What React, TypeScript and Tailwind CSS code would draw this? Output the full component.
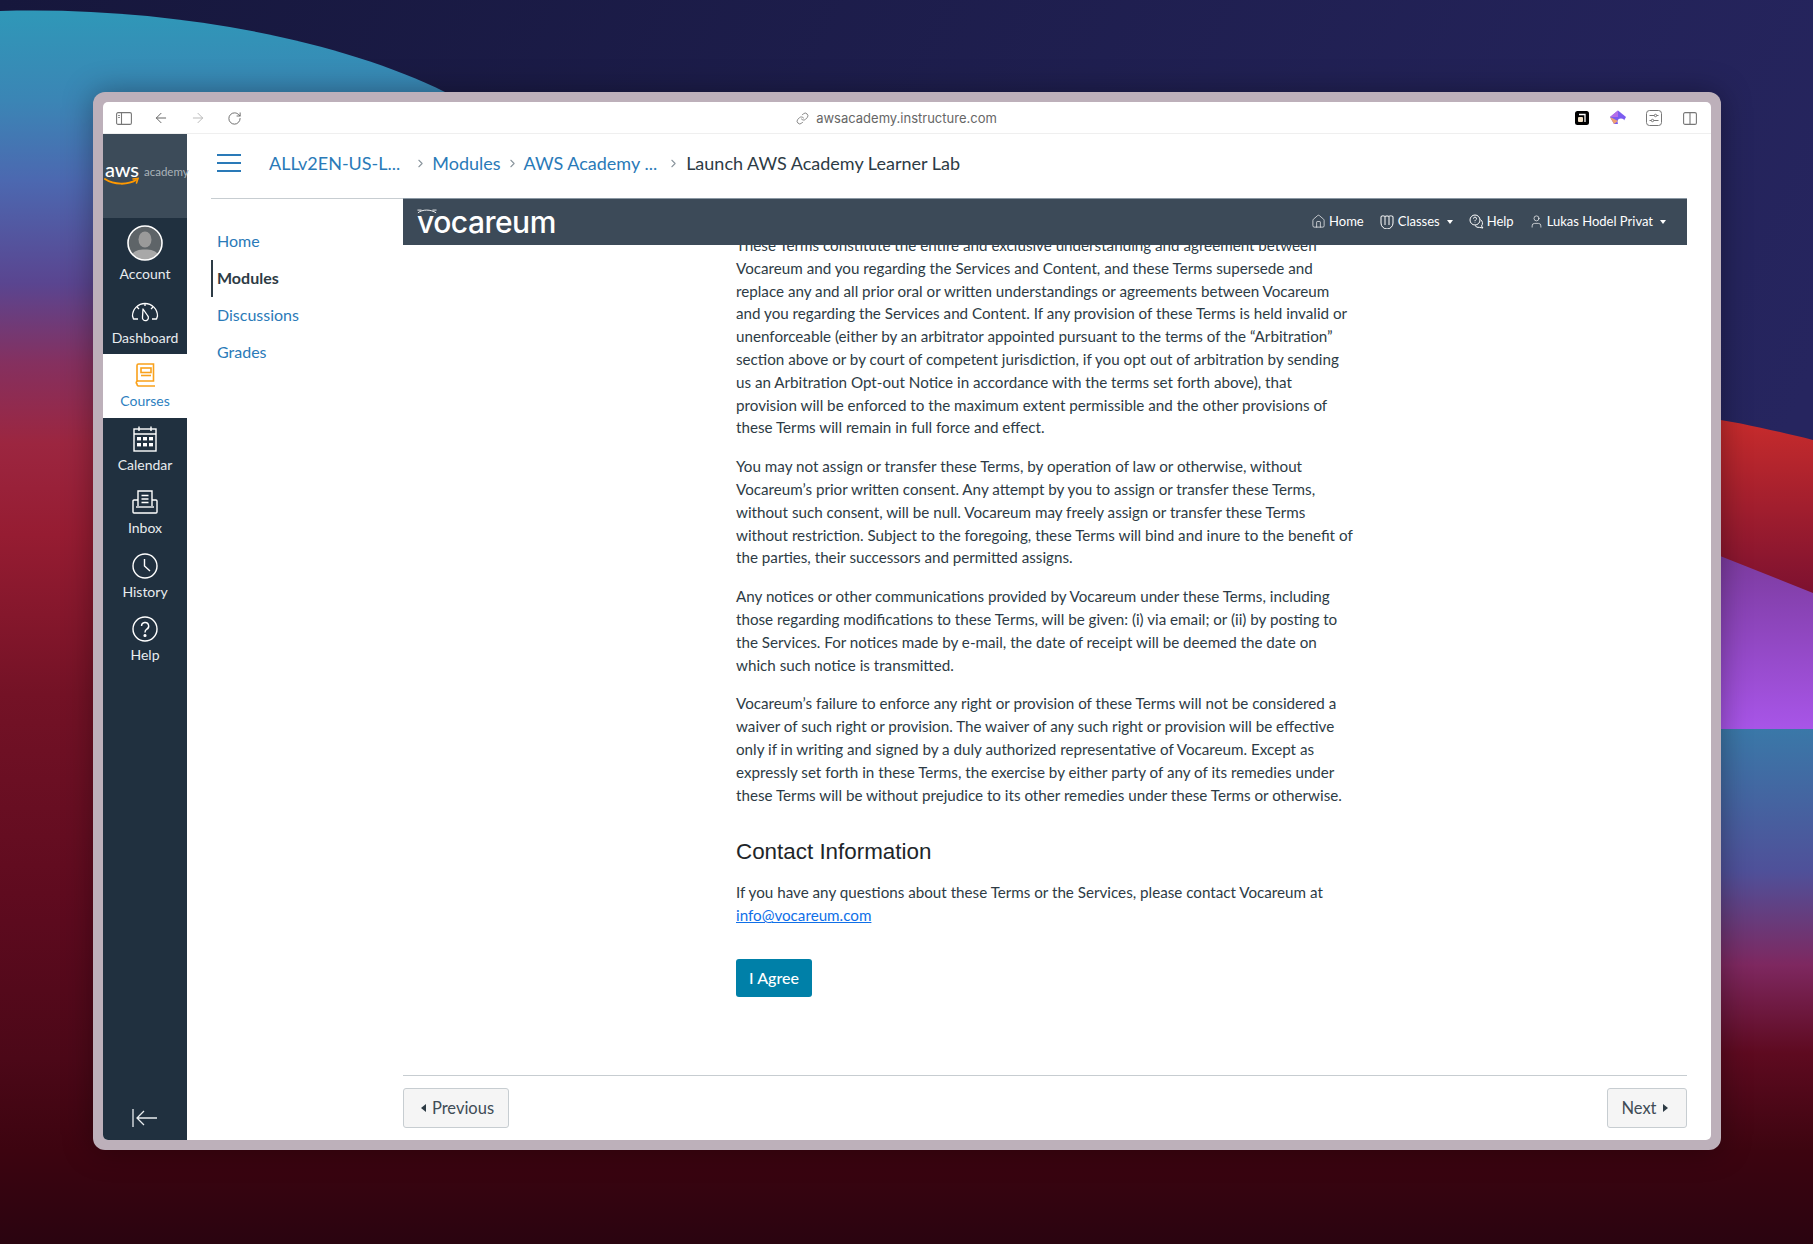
import { ArrowLeft, ArrowRight, ChevronRight, House, Link, RotateCw, User } from 'lucide-react';

const lato = 'font-["Lato","Liberation_Sans",sans-serif]';

const paragraphs = [
  [
    'These Terms constitute the entire and exclusive understanding and agreement between',
    'Vocareum and you regarding the Services and Content, and these Terms supersede and',
    'replace any and all prior oral or written understandings or agreements between Vocareum',
    'and you regarding the Services and Content. If any provision of these Terms is held invalid or',
    'unenforceable (either by an arbitrator appointed pursuant to the terms of the “Arbitration”',
    'section above or by court of competent jurisdiction, if you opt out of arbitration by sending',
    'us an Arbitration Opt-out Notice in accordance with the terms set forth above), that',
    'provision will be enforced to the maximum extent permissible and the other provisions of',
    'these Terms will remain in full force and effect.',
  ],
  [
    'You may not assign or transfer these Terms, by operation of law or otherwise, without',
    'Vocareum’s prior written consent. Any attempt by you to assign or transfer these Terms,',
    'without such consent, will be null. Vocareum may freely assign or transfer these Terms',
    'without restriction. Subject to the foregoing, these Terms will bind and inure to the benefit of',
    'the parties, their successors and permitted assigns.',
  ],
  [
    'Any notices or other communications provided by Vocareum under these Terms, including',
    'those regarding modifications to these Terms, will be given: (i) via email; or (ii) by posting to',
    'the Services. For notices made by e-mail, the date of receipt will be deemed the date on',
    'which such notice is transmitted.',
  ],
  [
    'Vocareum’s failure to enforce any right or provision of these Terms will not be considered a',
    'waiver of such right or provision. The waiver of any such right or provision will be effective',
    'only if in writing and signed by a duly authorized representative of Vocareum. Except as',
    'expressly set forth in these Terms, the exercise by either party of any of its remedies under',
    'these Terms will be without prejudice to its other remedies under these Terms or otherwise.',
  ],
];

function Wallpaper() {
  return (
    <svg className="absolute inset-0" width="1813" height="1244" viewBox="0 0 1813 1244">
      <defs>
        <linearGradient id="navy" x1="0" y1="0" x2="1" y2="0.3">
          <stop offset="0" stopColor="#16173c" />
          <stop offset="1" stopColor="#26255f" />
        </linearGradient>
        <linearGradient id="left" gradientUnits="userSpaceOnUse" x1="0" y1="10" x2="0" y2="1150">
          <stop offset="0" stopColor="#2f98b8" />
          <stop offset="0.08" stopColor="#3b85b5" />
          <stop offset="0.15" stopColor="#4c68b0" />
          <stop offset="0.24" stopColor="#5a4590" />
          <stop offset="0.31" stopColor="#85305f" />
          <stop offset="0.38" stopColor="#9c2640" />
          <stop offset="0.46" stopColor="#961c32" />
          <stop offset="0.6" stopColor="#741226" />
          <stop offset="0.8" stopColor="#5c0a1e" />
          <stop offset="0.92" stopColor="#4c0818" />
          <stop offset="1" stopColor="#3d0410" />
        </linearGradient>
        <linearGradient id="rightRed" x1="0" y1="0" x2="0" y2="1">
          <stop offset="0" stopColor="#c82c2c" />
          <stop offset="1" stopColor="#7a1030" />
        </linearGradient>
        <linearGradient id="purple" x1="0" y1="0" x2="0" y2="1">
          <stop offset="0" stopColor="#7a3a9c" />
          <stop offset="1" stopColor="#a855e8" />
        </linearGradient>
        <linearGradient id="rightLow" gradientUnits="userSpaceOnUse" x1="0" y1="729" x2="0" y2="1150">
          <stop offset="0" stopColor="#3a78a8" />
          <stop offset="0.34" stopColor="#4f5099" />
          <stop offset="0.56" stopColor="#7e2860" />
          <stop offset="0.77" stopColor="#5e0a20" />
          <stop offset="1" stopColor="#3d0510" />
        </linearGradient>
        <linearGradient id="bottom" x1="0" y1="0" x2="0" y2="1">
          <stop offset="0" stopColor="#3d0410" />
          <stop offset="1" stopColor="#2a0410" />
        </linearGradient>
      </defs>
      <rect width="1813" height="1244" fill="url(#navy)" />
      <path d="M0 11 C170 6 340 40 445 92 L445 1150 L0 1150 Z" fill="url(#left)" />
      <path d="M1700 417 C1740 422 1780 432 1813 440 L1813 600 L1700 560 Z" fill="url(#rightRed)" />
      <path d="M1700 548 L1813 593 L1813 729 L1700 729 Z" fill="url(#purple)" />
      <rect x="1700" y="729" width="113" height="421" fill="url(#rightLow)" />
      <rect y="1150" width="1813" height="94" fill="url(#bottom)" />
    </svg>
  );
}

function SidebarItem({ label, icon, active }: { label: string; icon: React.ReactNode; active?: boolean }) {
  return (
    <div className={`flex h-[63.5px] flex-col items-center justify-start pt-[6px] ${active ? 'bg-white text-[#2d7fc0]' : 'text-[#e8ecef]'}`}>
      <div className="flex h-[30px] items-center justify-center">{icon}</div>
      <span className="mt-[2px] text-[14px] leading-[18px]">{label}</span>
    </div>
  );
}

function GlobalNav() {
  return (
    <aside className="flex w-[84px] shrink-0 flex-col bg-[#20303f]">
      <div className="relative mb-[9px] h-[84px] bg-[#3c4b59]">
        <span className="absolute left-[2px] top-[24px] text-[20px] font-medium leading-[22px] tracking-[-0.2px] text-white">aws</span>
        <span className="absolute left-[41px] top-[31px] whitespace-nowrap text-[11.5px] leading-[14px] text-[#aab3ba]">academy</span>
        <svg className="absolute left-[1px] top-[43px]" width="36" height="11" viewBox="0 0 36 11" fill="none">
          <path d="M1 2 C10 8 24 8 32 3" stroke="#f90" strokeWidth="2" strokeLinecap="round" />
          <path d="M29 2 L34 1.5 L32.5 6" stroke="#f90" strokeWidth="1.6" strokeLinecap="round" />
        </svg>
      </div>
      <SidebarItem
        label="Account"
        icon={
          <svg width="36" height="36" viewBox="0 0 36 36" className="-mt-[10px]">
            <clipPath id="avatar"><circle cx="18" cy="18" r="17" /></clipPath>
            <circle cx="18" cy="18" r="17" fill="#5e6468" />
            <g clipPath="url(#avatar)">
              <ellipse cx="18" cy="14.5" rx="6.5" ry="8" fill="#9a9a9a" />
              <path d="M3 35 C4 26 11 24.5 18 24.5 C25 24.5 32 26 33 35Z" fill="#a8a8a8" />
            </g>
            <circle cx="18" cy="18" r="17" fill="none" stroke="#fff" strokeWidth="1.6" />
          </svg>
        }
      />
      <SidebarItem
        label="Dashboard"
        icon={
          <svg width="28" height="22" viewBox="0 0 28 22" fill="none" stroke="#fff" strokeWidth="1.3" className="-mt-[2px]">
            <path d="M7 19 H2.5 L1.5 16 A12.5 12.5 0 0 1 26.5 16 L25.5 19 H21" strokeLinejoin="round" />
            <path d="M14 3.5 V6 M6 7 L8 9 M22 7 L20 9" />
            <path d="M12 9 L16.5 15.5 A3 3 0 1 1 11.5 17 Z" strokeLinejoin="round" />
          </svg>
        }
      />
      <SidebarItem
        active
        label="Courses"
        icon={
          <svg width="21" height="24" viewBox="0 0 21 24" fill="none" stroke="#f9a11b" strokeWidth="1.6">
            <path d="M2 19 V2.5 A1.5 1.5 0 0 1 3.5 1 H18.5 V18 H3.5 A1.7 1.7 0 0 0 2 21 A1.7 1.7 0 0 0 3.5 23 H20" />
            <rect x="6" y="5" width="10" height="4.5" />
            <path d="M6 12.5 H16" />
          </svg>
        }
      />
      <SidebarItem
        label="Calendar"
        icon={
          <svg width="24" height="26" viewBox="0 0 24 26" fill="none" stroke="#fff" strokeWidth="1.4">
            <rect x="1" y="3" width="22" height="22" />
            <path d="M1 8 H23 M6 0.5 V5 M18 0.5 V5" />
            <g fill="#fff" stroke="none">
              <rect x="4" y="11" width="4" height="3.4" /><rect x="10" y="11" width="4" height="3.4" /><rect x="16" y="11" width="4" height="3.4" />
              <rect x="4" y="17" width="4" height="3.4" /><rect x="10" y="17" width="4" height="3.4" /><rect x="16" y="17" width="4" height="3.4" />
            </g>
          </svg>
        }
      />
      <SidebarItem
        label="Inbox"
        icon={
          <svg width="26" height="24" viewBox="0 0 26 24" fill="none" stroke="#fff" strokeWidth="1.4">
            <path d="M6 16 V1 H20 V16" />
            <path d="M9.5 5.5 H16.5 M9.5 9 H16.5 M9.5 12.5 H16.5" />
            <path d="M6 10 H2 A1 1 0 0 0 1 11 V22 A1 1 0 0 0 2 23 H24 A1 1 0 0 0 25 22 V11 A1 1 0 0 0 24 10 H20" />
            <path d="M4 17 H22" />
          </svg>
        }
      />
      <SidebarItem
        label="History"
        icon={
          <svg width="26" height="26" viewBox="0 0 26 26" fill="none" stroke="#fff" strokeWidth="1.4">
            <circle cx="13" cy="13" r="12" />
            <path d="M12.5 6 V13 L18 18" />
          </svg>
        }
      />
      <SidebarItem
        label="Help"
        icon={
          <svg width="26" height="26" viewBox="0 0 26 26" fill="none" stroke="#fff" strokeWidth="1.4">
            <circle cx="13" cy="13" r="12" />
            <path d="M9.5 10 A3.6 3.6 0 1 1 14.5 13.4 C13.3 14 13 14.8 13 16.5" />
            <circle cx="13" cy="19.5" r="0.9" fill="#fff" />
          </svg>
        }
      />
      <div className="mt-auto flex justify-center pb-[12px]">
        <svg width="26" height="20" viewBox="0 0 26 20" fill="none" stroke="#e8ecef" strokeWidth="1.3">
          <path d="M1 1 V19 M25 10 H5 M12 3 L5 10 L12 17" />
        </svg>
      </div>
    </aside>
  );
}

function Caret() {
  return <span className="ml-[7px] h-0 w-0 border-x-[3.5px] border-t-[4px] border-x-transparent border-t-white" />;
}

function VocareumBar() {
  return (
    <div className="flex h-[47px] shrink-0 items-center justify-between border-t border-[#8b98a3] bg-[#3c4a58] pl-[14px] pr-[21px] text-white">
      <div className="relative">
        <svg className="absolute left-[0px] top-[3px]" width="20" height="8" viewBox="0 0 22 8" fill="none" stroke="#fff" strokeWidth="1">
          <path d="M1 6 C6 2 15 2 21 6 M0.5 3 H5 M17 3 H21.5" />
        </svg>
        <span className="block font-['Inter'] text-[30px] font-medium leading-[36px] tracking-[-0.5px]">vocareum</span>
      </div>
      <div className="flex items-center pb-[1px] text-[13px]">
        <House size={15} strokeWidth={1.1} />
        <span className="ml-[3px]">Home</span>
        <svg width="14" height="14" viewBox="0 0 14 14" fill="none" stroke="#fff" strokeWidth="1" className="ml-[16px]">
          <path d="M1 1.5 V8 A5 5 0 0 0 13 8 V1.5 C11 0.5 9.5 0.8 9 1.5 C8 0.8 6 0.8 5 1.5 C4 0.8 2.5 0.5 1 1.5Z" />
          <path d="M5 1.5 V10 M9 1.5 V10" />
        </svg>
        <span className="ml-[4px]">Classes</span>
        <Caret />
        <svg width="15" height="15" viewBox="0 0 15 15" fill="none" stroke="#fff" strokeWidth="1" className="ml-[16px]">
          <circle cx="6" cy="6" r="5" />
          <path d="M4.5 4.6 A1.5 1.5 0 1 1 6.6 6 C6.1 6.3 6 6.6 6 7.2 M6 8.6 V9" />
          <path d="M11.5 5.5 A4.5 4.5 0 0 1 12.5 12 L14 14 L10.5 13.4 A4.5 4.5 0 0 1 6 11.5" />
        </svg>
        <span className="ml-[3px]">Help</span>
        <User size={15} strokeWidth={1.1} className="ml-[15px]" />
        <span className="ml-[3px]">Lukas Hodel Privat</span>
        <Caret />
      </div>
    </div>
  );
}

function Terms() {
  return (
    <div className="min-h-0 flex-1 overflow-hidden pl-[333px] text-[15.2px] leading-[22.8px] text-[#2d3b45]">
      <div className="-mt-[11px] whitespace-nowrap">
        {paragraphs.map((lines, i) => (
          <p key={i} className="mb-[16px]">
            {lines.map((line, j) => (
              <span key={j} className="block">{line}</span>
            ))}
          </p>
        ))}
        <h2 className="mb-[14px] mt-[31px] font-['Liberation_Sans'] text-[22.4px] font-normal leading-[30px] text-[#212529]">Contact Information</h2>
        <p>
          <span className="block">If you have any questions about these Terms or the Services, please contact Vocareum at</span>
          <a className="block text-[#0f6fe8] underline">info@vocareum.com</a>
        </p>
        <button className="mt-[32px] h-[38px] w-[76px] rounded-[3px] bg-[#0080a8] text-[16px] font-medium text-white">I Agree</button>
      </div>
    </div>
  );
}

export default function App() {
  return (
    <div className={`relative h-[1244px] w-[1813px] overflow-hidden ${lato}`}>
      <Wallpaper />
      <div className="relative ml-[93px] mt-[92px] h-[1058px] w-[1628px] rounded-[12px] bg-[#bdb0ba] p-[10px] shadow-[0_0_30px_rgba(0,0,0,0.35)]">
        <div className="flex h-full flex-col overflow-hidden rounded-[5px] bg-white">
          <div className="flex h-[32px] shrink-0 items-center border-b border-[#efefef] pl-[13px] pr-[14px] pt-[1px] text-[#666]">
            <svg width="16" height="13" viewBox="0 0 16 13" fill="none" stroke="#777" strokeWidth="1.1">
              <rect x="0.6" y="0.6" width="14.8" height="11.8" rx="1.5" />
              <path d="M5.5 0.6 V12.4" />
              <path d="M2.2 3.5 H3.8 M2.2 5.5 H3.8" />
            </svg>
            <ArrowLeft size={16} strokeWidth={1.5} className="ml-[21px]" />
            <ArrowRight size={16} strokeWidth={1.5} className="ml-[21px] text-[#bbb]" />
            <RotateCw size={15} strokeWidth={1.5} className="ml-[21px]" />
            <div className="flex flex-1 items-center justify-center pr-[24px] pt-[1px] font-['Inter'] text-[13px] text-[#666]">
              <Link size={13} strokeWidth={1.4} className="mr-[7px]" />
              awsacademy.instructure.com
            </div>
            <svg width="14" height="14" viewBox="0 0 14 14">
              <rect width="14" height="14" rx="2.5" fill="#000" />
              <rect x="3" y="6" width="5" height="5" rx="1" fill="#f4e2c8" />
              <path d="M4 3.5 H10 V11" fill="none" stroke="#fff" strokeWidth="1.3" />
            </svg>
            <svg width="16" height="16" viewBox="0 0 16 16" className="ml-[21px]">
              <path d="M8 0.5 L16 7 L12 14 L4 14 L0 7 Z" fill="#7b5cf0" />
              <path d="M0 7 L8 0.5 L8 7 Z" fill="#b46ee8" />
              <path d="M4 14 L0 7 L8 11 Z" fill="#f0a070" />
              <circle cx="11" cy="12" r="3.4" fill="#fff" />
            </svg>
            <svg width="16" height="16" viewBox="0 0 16 16" fill="none" stroke="#777" strokeWidth="1" className="ml-[20px]">
              <rect x="0.5" y="0.5" width="15" height="15" rx="3" />
              <path d="M3.5 5.5 H12.5 M3.5 10.5 H12.5" />
              <circle cx="9.5" cy="5.5" r="1.2" fill="#fff" />
              <circle cx="6.5" cy="10.5" r="1.2" fill="#fff" />
            </svg>
            <svg width="14" height="13" viewBox="0 0 14 13" fill="none" stroke="#777" strokeWidth="1.1" className="ml-[21px]">
              <rect x="0.6" y="0.6" width="12.8" height="11.8" rx="1.5" />
              <path d="M7 0.6 V12.4" />
            </svg>
          </div>
          <div className="flex min-h-0 flex-1">
            <GlobalNav />
            <main className="flex min-w-0 flex-1 flex-col pl-[24px] pr-[24px]">
              <div className="flex h-[64px] shrink-0 items-center pb-[6px] text-[18px] text-[#2a7ab8]">
                <span className="ml-[6px] flex w-[24px] flex-col gap-[6.5px]">
                  <i className="block h-[1.5px] bg-[#2a7ab8]" />
                  <i className="block h-[1.5px] bg-[#2a7ab8]" />
                  <i className="block h-[1.5px] bg-[#2a7ab8]" />
                </span>
                <span className="ml-[28px]">ALLv2EN-US-L...</span>
                <ChevronRight size={13} className="ml-[14px] text-[#8b969e]" />
                <span className="ml-[5px]">Modules</span>
                <ChevronRight size={13} className="ml-[5px] text-[#8b969e]" />
                <span className="ml-[5px]">AWS Academy ...</span>
                <ChevronRight size={13} className="ml-[10px] text-[#8b969e]" />
                <span className="ml-[6px] text-[#2d3b45]">Launch AWS Academy Learner Lab</span>
              </div>
              <div className="flex min-h-0 flex-1">
                <nav className="w-[192px] shrink-0 border-t border-[#c7cdd1] pt-[23.5px] text-[16px] text-[#2a7ab8]">
                  <div className="flex h-[37px] items-center pl-[6px]">Home</div>
                  <div className="flex h-[37px] items-center border-l-2 border-[#2d3b45] pl-[4px] font-bold text-[#2d3b45]">Modules</div>
                  <div className="flex h-[37px] items-center pl-[6px]">Discussions</div>
                  <div className="flex h-[37px] items-center pl-[6px]">Grades</div>
                </nav>
                <div className="flex min-w-0 flex-1 flex-col">
                  <VocareumBar />
                  <Terms />
                  <div className="flex h-[65px] shrink-0 items-start justify-between border-t border-[#c7cdd1] pt-[12px] text-[16.5px] text-[#3f4c56]">
                    <button className="flex h-[40px] w-[106px] items-center justify-center rounded-[3px] border border-[#c7cdd1] bg-[#f5f5f5] pl-[3px]">
                      <span className="mr-[6px] h-0 w-0 border-y-[4px] border-r-[5px] border-y-transparent border-r-[#2d3b45]" />
                      Previous
                    </button>
                    <button className="flex h-[40px] w-[80px] items-center justify-center rounded-[3px] border border-[#c7cdd1] bg-[#f5f5f5] pr-[5px]">
                      Next
                      <span className="ml-[6px] h-0 w-0 border-y-[4px] border-l-[5px] border-y-transparent border-l-[#2d3b45]" />
                    </button>
                  </div>
                </div>
              </div>
            </main>
          </div>
        </div>
      </div>
    </div>
  );
}
